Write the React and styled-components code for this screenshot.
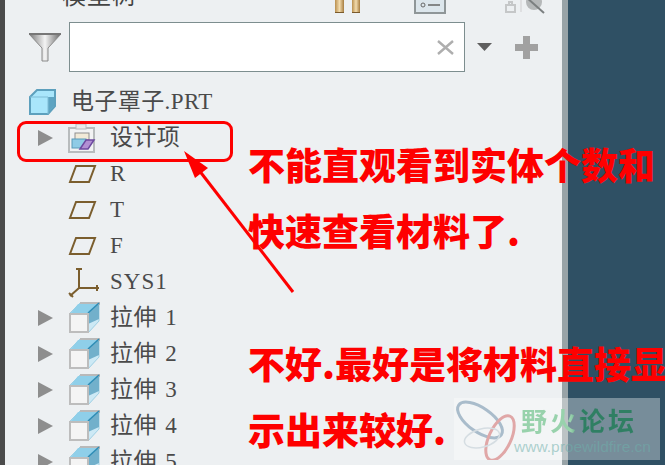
import React from "react";
import styled, { createGlobalStyle } from "styled-components";

const Global = createGlobalStyle`
  html, body { margin: 0; padding: 0; width: 665px; height: 465px; overflow: hidden; background: #2f5064; }
`;
const Page = styled.div`
  position: relative; width: 665px; height: 465px; overflow: hidden; display: flex;
  background: #2f5064;
`;
const EdgeStrip = styled.div`width: 5px; flex: none; background: #4b4b4b;`;
const Panel = styled.div`
  width: 563px; flex: none; box-sizing: border-box; background: #edf0f2; border-right: 6px solid #98a3a7; display: flex; flex-direction: column;
`;
const TopRow = styled.div`height: 22px; flex: none; display: flex; align-items: flex-start; position: relative;`;
const Title = styled.div`
  margin: -18px 0 0 57px; width: 272px; font: 24px/24px "Noto Sans CJK SC", sans-serif; color: #444; letter-spacing: 1px;
`;
const TopIcon = styled.svg`display: block; flex: none; margin-left: ${(p) => p.$ml}px;`;
const FilterRow = styled.div`display: flex; flex: none; align-items: center; height: 50px; padding-left: 24px;`;
const SearchBox = styled.div`
  width: 384px; height: 48px; margin-left: 8px; background: #fff; border: 1px solid #7d8e8f;
  display: flex; align-items: center; justify-content: flex-end; padding-right: 10px; box-sizing: content-box;
`;
const Tree = styled.div`margin-top: 12px; flex: none; display: flex; flex-direction: column;`;
const Row = styled.div`
  height: 36px; flex: none; display: flex; align-items: center; padding-left: ${(p) => (p.$root ? 24 : 33)}px;
`;
const CaretSlot = styled.div`width: 30px; flex: none; display: flex; align-items: center;`;
const IconSlot = styled.div`width: ${(p) => p.$w}px; flex: none; display: flex; align-items: center;`;
const Label = styled.span`
  font: 23px/30px "Liberation Serif", "Noto Sans CJK SC", serif; color: #4a4a4a; letter-spacing: ${(p) => p.$sp || 0.4}px; white-space: pre;
`;
const Note = styled.div`
  position: absolute; left: 248px; top: ${(p) => p.$top}px; white-space: nowrap;
  font: 900 37px/44px "Noto Sans CJK SC", sans-serif; color: #fe0000;
`;
const Highlight = styled.div`
  position: absolute; left: 17px; top: 121px; width: 216px; height: 41px; box-sizing: border-box;
  border: 3px solid #fe0000; border-radius: 9px;
`;
const Overlay = styled.svg`position: absolute; left: 0; top: 0;`;
const Watermark = styled.div`
  position: absolute; left: 454px; top: 398px; width: 206px; height: 62px; background: rgba(255,255,255,0.35);
  display: flex;
`;
const WmText = styled.div`display: flex; flex-direction: column; margin-left: -14px; flex: none; width: 148px;`;
const WmTitle = styled.div`
  font: 700 26px/32px "Noto Sans CJK SC", sans-serif; letter-spacing: 3px; margin: 6px 0 0 9px; white-space: nowrap;
  background: linear-gradient(90deg, #98d2ac 0 36%, #2f7f63 44% 100%); -webkit-background-clip: text; background-clip: text; color: transparent;
`;
const WmUrl = styled.div`font: 15.5px/18px "Liberation Sans", sans-serif; color: rgba(110,175,170,0.55); margin: 2px 0 0 2px; white-space: nowrap;`;

const Caret = () => (
  <svg width="15" height="16" viewBox="0 0 15 16"><path d="M0 0L15 8L0 16Z" fill="#8e8e8e" /></svg>
);
const RootCube = () => (
  <svg width="27" height="26" viewBox="0 0 27 26">
    <path d="M1 8L8 1H26V17L19 25H1Z" fill="#a9e6fb" stroke="#5da0bd" strokeWidth="2" />
    <path d="M19 8H25V17L19 24Z" fill="#5ea4c2" />
    <path d="M1 8H19V25" fill="none" stroke="#7fbdd6" strokeWidth="1" />
  </svg>
);
const DesignIcon = () => (
  <svg width="28" height="30" viewBox="0 0 28 30">
    <rect x="1" y="5" width="25" height="24" fill="#f2f3f4" stroke="#b8bcbd" strokeWidth="2" />
    <rect x="8" y="1" width="10" height="5" fill="#e9eaea" stroke="#b8bcbd" />
    <rect x="7" y="10" width="14" height="7" fill="#f2ead8" stroke="#8f8f8f" />
    <rect x="4" y="16" width="14" height="9" fill="#8fcbe6" stroke="#5b9ab8" />
    <path d="M12 26L18 17H26L20 26Z" fill="#b28fd3" stroke="#6d4aa0" strokeWidth="1.5" />
  </svg>
);
const Plane = () => (
  <svg width="30" height="20" viewBox="0 0 30 20">
    <path d="M8 2H27L21 18H2Z" fill="none" stroke="#7b5e2e" strokeWidth="2" />
  </svg>
);
const Csys = () => (
  <svg width="32" height="32" viewBox="0 0 32 32">
    <path d="M11 3V22H31M11 22L2 30" fill="none" stroke="#7b5e2e" strokeWidth="2" />
    <path d="M8 3H14M29 19V25M1 27L5 31" stroke="#7b5e2e" strokeWidth="2" />
  </svg>
);
const Extrude = () => (
  <svg width="32" height="32" viewBox="0 0 32 32">
    <path d="M2 11L12 1H31V19L20 31V11Z" fill="#cde9f5" stroke="#9fd0e4" />
    <path d="M10 2H31L21 11H3Z" fill="#8fcfe9" />
    <path d="M20 11L31 1V17L20 22Z" fill="#72b0cb" />
    <path d="M12 1H31V3" fill="none" stroke="#b9b9b9" strokeWidth="2" />
    <path d="M20 11L31 1" stroke="#2e8cb5" strokeWidth="1.5" />
    <rect x="2" y="12" width="18" height="18" fill="#f4f4f4" stroke="#bdbdbd" strokeWidth="2" />
  </svg>
);

const solids = ["1", "2", "3", "4", "5"];

export default function App() {
  return (
    <Page>
      <Global />
      <EdgeStrip />
      <Panel>
        <TopRow>
          <Title>模型树</Title>
          <TopIcon $ml={0} width="27" height="14" viewBox="0 0 27 14">
            <defs>
              <linearGradient id="gold"><stop offset="0" stopColor="#b98f4e" /><stop offset="0.5" stopColor="#f3dcae" /><stop offset="1" stopColor="#a67c3f" /></linearGradient>
            </defs>
            <rect x="1" y="0" width="9" height="13" fill="url(#gold)" />
            <rect x="18" y="0" width="8" height="13" fill="url(#gold)" />
            <path d="M1 12.5H10M18 12.5H26" stroke="#7a5a2c" />
          </TopIcon>
          <TopIcon $ml={53} width="33" height="14" viewBox="0 0 33 14">
            <rect x="1" y="-2" width="30" height="15" fill="#dce6ec" stroke="#8f9698" strokeWidth="2" />
            <circle cx="9" cy="5" r="2" fill="none" stroke="#666" />
            <path d="M14 5H26" stroke="#666" strokeWidth="1.5" />
          </TopIcon>
          <TopIcon $ml={57} width="42" height="15" viewBox="0 0 42 15">
            <path d="M2 5H11V12H2ZM5 5V2H8V5" fill="none" stroke="#c5c7c8" strokeWidth="2" />
            <path d="M17 0V12" stroke="#d8dadb" strokeWidth="1.5" />
            <circle cx="30" cy="2" r="8" fill="#b5b8b9" />
            <path d="M22 -3L40 13" stroke="#7b7f80" strokeWidth="2" />
          </TopIcon>
        </TopRow>
        <FilterRow>
          <svg width="32" height="29" viewBox="0 0 32 29">
            <defs>
              <linearGradient id="fun"><stop offset="0" stopColor="#777" /><stop offset="0.5" stopColor="#f4f4f4" /><stop offset="1" stopColor="#666" /></linearGradient>
            </defs>
            <path d="M0 1H32L19 15V28H13V15Z" fill="url(#fun)" stroke="#8a8a8a" strokeWidth="1" />
            <path d="M0 1H32" stroke="#777" strokeWidth="2" />
          </svg>
          <SearchBox>
            <svg width="17" height="15" viewBox="0 0 17 15"><path d="M1 1L16 14M16 1L1 14" stroke="#aeaeae" strokeWidth="2.4" /></svg>
          </SearchBox>
          <svg style={{ marginLeft: 12 }} width="15" height="8" viewBox="0 0 15 8"><path d="M0 0H15L7.5 8Z" fill="#5f5f5f" /></svg>
          <svg style={{ marginLeft: 23 }} width="23" height="23" viewBox="0 0 23 23"><path d="M8 0H15V8H23V15H15V23H8V15H0V8H8Z" fill="#a1a1a1" /></svg>
        </FilterRow>
        <Tree>
          <Row $root>
            <IconSlot $w={42}><RootCube /></IconSlot>
            <Label>电子罩子.PRT</Label>
          </Row>
          <Row>
            <CaretSlot><Caret /></CaretSlot>
            <IconSlot $w={42}><DesignIcon /></IconSlot>
            <Label>设计项</Label>
          </Row>
          {["R", "T", "F"].map((t) => (
            <Row key={t}>
              <CaretSlot />
              <IconSlot $w={42}><Plane /></IconSlot>
              <Label>{t}</Label>
            </Row>
          ))}
          <Row>
            <CaretSlot />
            <IconSlot $w={42}><Csys /></IconSlot>
            <Label $sp={1}>SYS1</Label>
          </Row>
          {solids.map((n) => (
            <Row key={n}>
              <CaretSlot><Caret /></CaretSlot>
              <IconSlot $w={42}><Extrude /></IconSlot>
              <Label>{"拉伸 \u200a" + n}</Label>
            </Row>
          ))}
        </Tree>
      </Panel>
      <Highlight />
      <Note $top={142}>不能直观看到实体个数和</Note>
      <Note $top={208}>快速查看材料了.</Note>
      <Note $top={341}>不好.最好是将材料直接显</Note>
      <Note $top={407}>示出来较好.</Note>
      <Overlay width="665" height="465" viewBox="0 0 665 465">
        <path d="M293 292L195 165" stroke="#fe0000" strokeWidth="3" fill="none" />
        <path d="M184 151L208 168L195 178Z" fill="#fe0000" />
      </Overlay>
      <Watermark>
        <svg width="72" height="62" viewBox="0 0 72 62">
          <ellipse cx="26" cy="22" rx="26" ry="12" transform="rotate(35 26 22)" fill="none" stroke="#a9bccb" strokeWidth="3" />
          <ellipse cx="46" cy="40" rx="24" ry="11" transform="rotate(-65 46 40)" fill="none" stroke="#e0a7a7" strokeWidth="3" />
          <ellipse cx="28" cy="40" rx="18" ry="9" transform="rotate(-15 28 40)" fill="none" stroke="#d5dde2" strokeWidth="1.5" />
        </svg>
        <WmText>
          <WmTitle>野火论坛</WmTitle>
          <WmUrl>www.proewildfire.cn</WmUrl>
        </WmText>
      </Watermark>
    </Page>
  );
}
